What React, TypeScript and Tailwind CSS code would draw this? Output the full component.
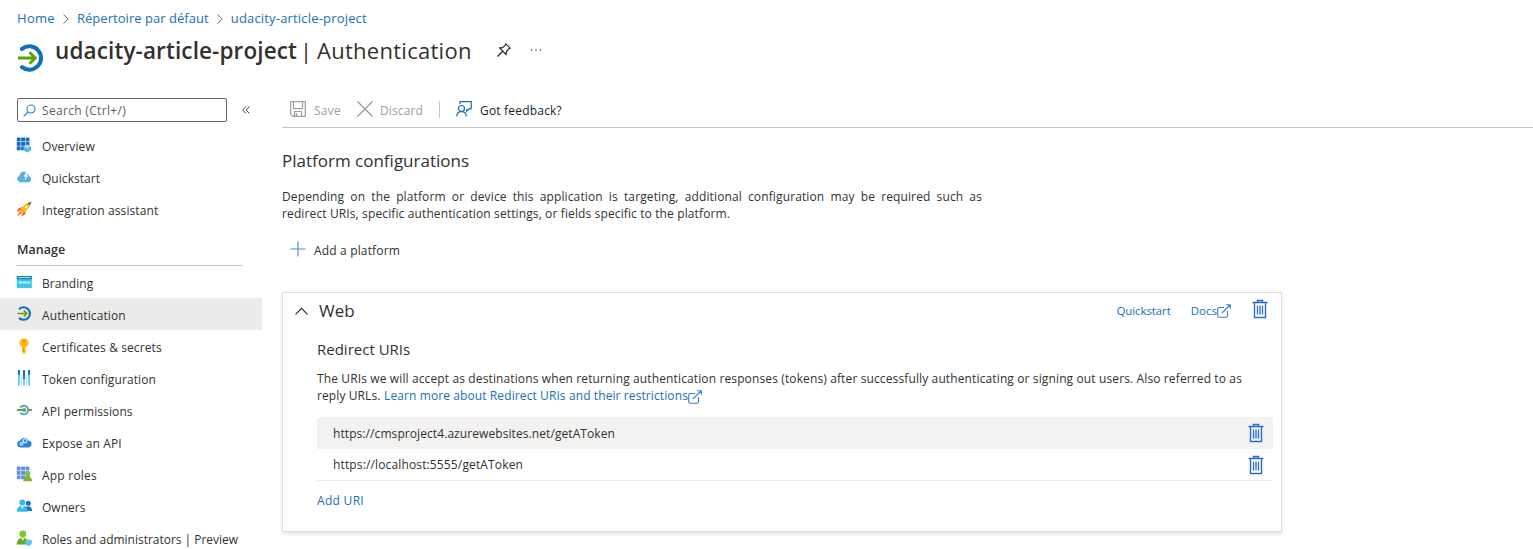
import { type ReactNode } from "react";

function AuthIcon({ className }: { className: string }) {
  return (
    <svg viewBox="0 0 28 28" fill="none" className={className}>
      <path d="M5 4.900A11.700 11.700 0 1 1 5 23.100" stroke="#0f70c0" strokeWidth="4" strokeLinecap="round" />
      <path d="M1 14H18M12.500 8.200 18.300 14l-5.800 5.800" stroke="#5ea010" strokeWidth="2.800" />
    </svg>
  );
}

function Grid({ color, children }: { color: string; children?: ReactNode }) {
  return (
    <svg viewBox="0 0 16 16" className="size-4">
      {[0, 4.4, 8.8].map((y) => [0, 4.4, 8.8].map((x) => <rect key={x + "-" + y} x={x + 0.8} y={y + 0.6} width="3.8" height="3.8" fill={color} />))}
      {children}
    </svg>
  );
}

const icons: Record<string, ReactNode> = {
  overview: (
    <Grid color="#1068bf">
      <path d="M11.200 7.500l3.800 2v4l-3.800 2.100-3.800-2.100v-4z" fill="#5fb6e6" />
      <path d="M7.400 9.500l3.800 2 3.800-2-3.800-2z" fill="#a3dcf5" />
    </Grid>
  ),
  quick: (
    <svg viewBox="0 0 16 16" className="size-4">
      <path d="M4 13.200A3.300 3.300 0 0 1 3.500 6.800 4 4 0 0 1 10.500 4 4.200 4.200 0 0 1 13.400 7.500 3 3 0 0 1 13 13.200z" fill="#55b0da" />
      <path d="M10.500 2.500 7.800 7.500H9.600L8.300 11.500 12.500 6.300H10.300L12.500 2.500z" fill="#fff" />
    </svg>
  ),
  rocket: (
    <svg viewBox="0 0 16 16" className="size-4">
      <path d="M6 6 2.500 7.300.8 11 4.500 9.500zM10 10l-1.200 3.800-3.300 1.500 1.300-3.800z" fill="#f06a1c" />
      <path d="M4.200 9.500.6 15.400 6.500 11.800z" fill="#f9791d" />
      <path d="M12.500 1.800C8.500 3 5 7 4 10.200L5.900 12C9.500 11 13 7.500 14.200 3.500z" fill="#fbb61c" />
      <path d="M11.600 2.200 15.600.5 13.900 4.500z" fill="#35725f" />
      <circle cx="10.300" cy="5.900" r="1.300" fill="#fff1b5" />
    </svg>
  ),
  branding: (
    <svg viewBox="0 0 16 16" className="size-4">
      <rect x=".8" y="2" width="15" height="12" rx=".6" fill="#3dc6e8" />
      <path d="M.8 5.200V2.600a.6.600 0 0 1 .6-.6h13.800a.6.600 0 0 1 .6.600v2.600z" fill="#1380b8" />
      <path d="M2.200 3.100h12.200v1H2.200z" fill="#b9e4f5" />
      <path d="m2.800 7.500.8 2 .8-2 .8 2 .8-2M6.700 7.500l.8 2 .8-2 .8 2 .8-2M10.600 7.500l.8 2 .8-2 .8 2 .8-2" fill="none" stroke="#fff" strokeWidth=".7" />
    </svg>
  ),
  auth: <AuthIcon className="ml-px size-[15px]" />,
  key: (
    <svg viewBox="0 0 16 16" className="size-4">
      <path d="M8 .5a4.500 4.500 0 0 0-2 8.500v5l2 2 2-2v-1l-1-1 1-1-1-1 1-1A4.500 4.500 0 0 0 8 .5z" fill="#fdb913" />
      <circle cx="8" cy="3.200" r="1.200" fill="#e08a00" />
      <path d="M6.900 9.500h.8v4.600l-.8-.6z" fill="#e89c0a" />
    </svg>
  ),
  token: (
    <svg viewBox="0 0 16 16" className="size-4">
      <path d="M2 0h2v5.500H2zM12 0h2v5.500h-2zM7 0h2v9.500H7z" fill="#1673bd" />
      <path d="M2 6h2v9.500H2zM12 6h2v9.500h-2zM7 10.500h2v5H7z" fill="#64d0ee" />
      <path d="M5.200 5H6v10.500h-.8zM10 5h.8v10.500H10z" fill="#9bdcf0" />
    </svg>
  ),
  perm: (
    <svg viewBox="0 0 16 16" fill="none" className="size-4">
      <path d="M4.300 5.600a4.300 4.300 0 1 1 0 4.800" stroke="#4fa5d0" strokeWidth="1.800" />
      <path d="M.8 8h7M12.700 8H16" stroke="#6aa83b" strokeWidth="1.800" />
      <circle cx="8.200" cy="8" r="2" fill="#6dad3c" />
    </svg>
  ),
  expose: (
    <svg viewBox="0 0 16 16" className="size-4">
      <path d="M4.300 13.500A3.600 3.600 0 0 1 4 6.400 4.700 4.700 0 0 1 12.600 6.600 3.500 3.500 0 0 1 12.700 13.500z" fill="#2b80dc" />
      <circle cx="9" cy="6.700" r="1.900" fill="none" stroke="#c6e6fb" strokeWidth="1.300" />
      <circle cx="5.500" cy="9.800" r="1.400" fill="none" stroke="#c6e6fb" strokeWidth="1.200" />
    </svg>
  ),
  roles: (
    <Grid color="#5b8fe0">
      <circle cx="11.800" cy="7.500" r="2.600" fill="#84c13c" />
      <path d="M7.200 15.200c0-3 1.500-5 4.400-5s4.400 2 4.400 5z" fill="#7ab82f" />
    </Grid>
  ),
  owners: (
    <svg viewBox="0 0 16 16" className="size-4">
      <circle cx="12.300" cy="5.300" r="2.500" fill="#1672cf" />
      <path d="M8.700 13c0-3 1-4.700 3.500-4.700s3.800 1.700 3.800 4.700z" fill="#1672cf" />
      <circle cx="6.300" cy="4.500" r="3" fill="#35bce2" />
      <path d="M.8 13.800c0-3.800 2-6 5.500-6s5.300 2.200 5.300 6z" fill="#35bce2" />
      <path d="M4.800 7.900h3L6.300 11z" fill="#e9f9fe" />
    </svg>
  ),
  admin: (
    <svg viewBox="0 0 16 16" className="size-4">
      <circle cx="6.800" cy="4" r="3.400" fill="#85c433" />
      <path d="M.8 14.500c0-4 2.300-6.700 6-6.700s5.600 2.700 5.600 6.700z" fill="#69ab2b" />
      <path d="M5.300 7.900h3l-1.500 3z" fill="#e8f5d8" />
      <path d="M12.700 9.200l3.200 1.200v2.300c0 1.500-1.500 2.600-3.200 3.200-1.700-.6-3.200-1.700-3.200-3.200v-2.300z" fill="#60c5ec" />
    </svg>
  ),
};

function NavItem({ icon, label, active = false, cls = "tracking-[0.1px]" }: { icon: string; label: string; active?: boolean; cls?: string }) {
  return (
    <li className={"flex h-8 shrink-0 items-center pl-4 " + (active ? "bg-[#edebe9]" : "")}>
      <span className="mb-px flex w-[26px] items-center">{icons[icon]}</span>
      <span className={"mt-0.5 whitespace-nowrap " + cls}>{label}</span>
    </li>
  );
}

function Trash() {
  return (
    <svg viewBox="0 0 16 20" fill="none" stroke="#2b6cc8" className="h-5 w-4">
      <path d="M.5 3.500h15M5.500 3.500v-2h5v2M2.500 3.500v15h11v-15" strokeWidth="1.400" />
      <path d="M5.500 6.500v9M8 6.500v9M10.500 6.500v9" strokeWidth="1.300" />
    </svg>
  );
}

function External() {
  return (
    <svg viewBox="0 0 14 14" fill="none" stroke="#3c7fd0" strokeWidth="1.100" className="mt-0.5 size-3.5">
      <path d="M7 3.500H2.200Q.7 3.500.7 5v6.800q0 1.500 1.500 1.500H9q1.500 0 1.500-1.500V7M5 9 13 1M9 .8h4.300V5" />
    </svg>
  );
}

function Crumb() {
  return (
    <svg viewBox="0 0 6 10" fill="none" stroke="#777" className="mx-2 h-2.5 w-1.5">
      <path d="m.5.500 4.700 4.500L.5 9.500" />
    </svg>
  );
}

export default function App() {
  return (
    <div className="flex h-[549px] w-[1533px] flex-col overflow-hidden bg-white font-['Open_Sans',sans-serif] text-[12px] leading-[17px] text-[#323130]">
      <nav className="flex h-9 shrink-0 items-center pt-px pl-[17px] text-[13px] whitespace-nowrap text-[#1a6fb8]">
        <span className="tracking-[0.3px]">Home</span>
        <Crumb />
        <span className="tracking-[0.04px]">Répertoire par défaut</span>
        <Crumb />
        <span className="tracking-[0.18px]">udacity-article-project</span>
      </nav>
      <header className="flex h-[58px] shrink-0 pl-[17px]">
        <AuthIcon className="mt-2 size-7" />
        <h1 className="-mt-px ml-[10px] flex text-[22px] leading-[31px] whitespace-nowrap">
          <span className="text-[22.5px] font-semibold tracking-[0.12px]">udacity-article-project</span>
          <span className="ml-[3px] tracking-[0.28px] [word-spacing:-1.5px]">| Authentication</span>
        </h1>
        <svg viewBox="0 0 14 14" fill="none" stroke="#222" strokeWidth="1.100" className="mt-[7px] ml-[25px] size-3.5">
          <path d="M8.800.8l4.400 4.400-1 .3-2.800 2.800-.3 3.200L2.500 4.900l3.200-.3 2.800-2.800zM5.500 8.500.5 13.500" />
        </svg>
        <svg viewBox="0 0 12 4" fill="#444" className="mt-3 ml-[19px] h-1 w-3">
          <circle cx="1.500" cy="2" r=".8" /><circle cx="6" cy="2" r=".8" /><circle cx="10.500" cy="2" r=".8" />
        </svg>
      </header>
      <div className="flex">
        <aside className="w-[262px] shrink-0">
          <div className="mt-1 ml-[17px] flex items-center">
            <div className="flex h-6 w-[210px] items-center rounded-[2px] border border-[#666] pl-[5px] text-[#605e5c]">
              <svg viewBox="0 0 13 13" fill="none" stroke="#2f7fce" strokeWidth="1.100" className="mr-1.5 size-[13px]">
                <circle cx="8" cy="5" r="4" /><path d="M5 8 .7 12.300" />
              </svg>
              <span className="tracking-[0.32px]">Search (Ctrl+/)</span>
            </div>
            <svg viewBox="0 0 8 8" fill="none" stroke="#444" className="ml-[15px] size-2">
              <path d="M4 .5.600 4 4 7.500M7.500.5 4.100 4l3.400 3.500" />
            </svg>
          </div>
          <ul className="mt-[7px]">
            <NavItem icon="overview" label="Overview" />
            <NavItem icon="quick" label="Quickstart" cls="tracking-[0.04px]" />
            <NavItem icon="rocket" label="Integration assistant" />
          </ul>
          <h2 className="mt-[15px] mr-5 ml-[17px] h-[26px] border-b border-[#c8c6c4] pt-px text-[12.5px] font-semibold">Manage</h2>
          <ul>
            <NavItem icon="branding" label="Branding" cls="tracking-[0.04px]" />
            <NavItem icon="auth" label="Authentication" active />
            <NavItem icon="key" label="Certificates & secrets" />
            <NavItem icon="token" label="Token configuration" />
            <NavItem icon="perm" label="API permissions" />
            <NavItem icon="expose" label="Expose an API" />
            <NavItem icon="roles" label="App roles" cls="tracking-[0.22px]" />
            <NavItem icon="owners" label="Owners" cls="tracking-normal" />
            <NavItem icon="admin" label="Roles and administrators | Preview" cls="tracking-[-0.02px]" />
          </ul>
        </aside>
        <main className="ml-5 flex-1">
          <div className="-mt-1.5 flex h-10 items-center border-b border-[#c8c6c4] pt-[5px] pl-2 text-[#a19f9d]">
            <svg viewBox="0 0 16 16" fill="none" stroke="#a19f9d" strokeWidth="1.200" className="mb-0.5 size-4">
              <path d="M.7.700h14.600v14.600H3L.7 13zM3.500.700v7h9v-7M4.500 15v-4.500h7V15M6.500 12v3" />
            </svg>
            <span className="ml-2 tracking-[0.25px]">Save</span>
            <svg viewBox="0 0 16 16" stroke="#949290" strokeWidth="1.100" className="mb-0.5 ml-4 size-4"><path d="m.5.500 15 15m0-15-15 15" /></svg>
            <span className="ml-[7px] tracking-[0.12px]">Discard</span>
            <span className="mx-4 mb-0.5 h-[17px] w-px bg-[#c8c6c4]" />
            <svg viewBox="0 0 16 16" fill="none" stroke="#1a6fb8" strokeWidth="1.200" className="mb-0.5 size-4">
              <path d="M4 3V.7h11.300v7h-2l-2.500 2.500V7.700M.7 15.500c.2-3 2-4.800 4.800-4.800s4.600 1.800 4.800 4.800" /><circle cx="5.500" cy="7.500" r="3" />
            </svg>
            <span className="ml-2 tracking-[0.2px] text-[#201f1e]">Got feedback?</span>
          </div>
          <h2 className="mt-[21px] text-[17px] leading-6">Platform configurations</h2>
          <p className="mt-[15px] w-[700px] tracking-[0.123px]">
            <span className="block [text-align-last:justify]">Depending on the platform or device this application is targeting, additional configuration may be required such as</span>
            redirect URIs, specific authentication settings, or fields specific to the platform.
          </p>
          <div className="mt-[19px] flex items-center pl-2">
            <svg viewBox="0 0 16 16" stroke="#3a8bd6" strokeWidth="1.100" className="mr-2 mb-0.5 size-4"><path d="M8 .5v15M.5 8h15" /></svg>
            <span className="tracking-[0.16px]">Add a platform</span>
          </div>
          <section className="mt-[33px] h-60 w-[1000px] border border-[#e1dfdd] pr-2 shadow-[0_2px_4px_rgba(0,0,0,0.12)]">
            <div className="flex h-[34px] items-center pl-3">
              <svg viewBox="0 0 13 8" fill="none" stroke="#222" strokeWidth="1.100" className="mt-0.5 h-2 w-[13px]"><path d="m.5 7.300 6-6 6 6" /></svg>
              <span className="ml-[11px] text-[17px]">Web</span>
              <div className="ml-auto flex items-center pr-[5px] text-[11.5px] text-[#1a6fb8]">
                <span className="tracking-[-0.1px]">Quickstart</span>
                <span className="ml-5">Docs</span>
                <External />
                <span className="mb-0.5 ml-[21px]"><Trash /></span>
              </div>
            </div>
            <div className="pl-[34px]">
              <h3 className="mt-3 text-[15px] leading-5">Redirect URIs</h3>
              <p className="mt-[11px] tracking-[0.124px] whitespace-nowrap">The URIs we will accept as destinations when returning authentication responses (tokens) after successfully authenticating or signing out users. Also referred to as</p>
              <p className="flex items-center tracking-[0.1px]">reply URLs.
                <span className="ml-[3.5px] text-[#1a6fb8]">Learn more about Redirect URIs and their restrictions</span><External />
              </p>
              <ul className="mt-[13px]">
                <li className="flex h-8 items-center justify-between bg-[#f3f2f1] pr-[9px] pl-4"><span className="tracking-[0.08px]">https://cmsproject4.azurewebsites.net/getAToken</span><Trash /></li>
                <li className="flex h-8 items-center justify-between border-b border-[#edebe9] pr-[9px] pl-4"><span className="tracking-[0.14px]">https://localhost:5555/getAToken</span><Trash /></li>
              </ul>
              <p className="mt-[11px] tracking-[0.3px] text-[#1a6fb8]">Add URI</p>
            </div>
          </section>
        </main>
      </div>
    </div>
  );
}
